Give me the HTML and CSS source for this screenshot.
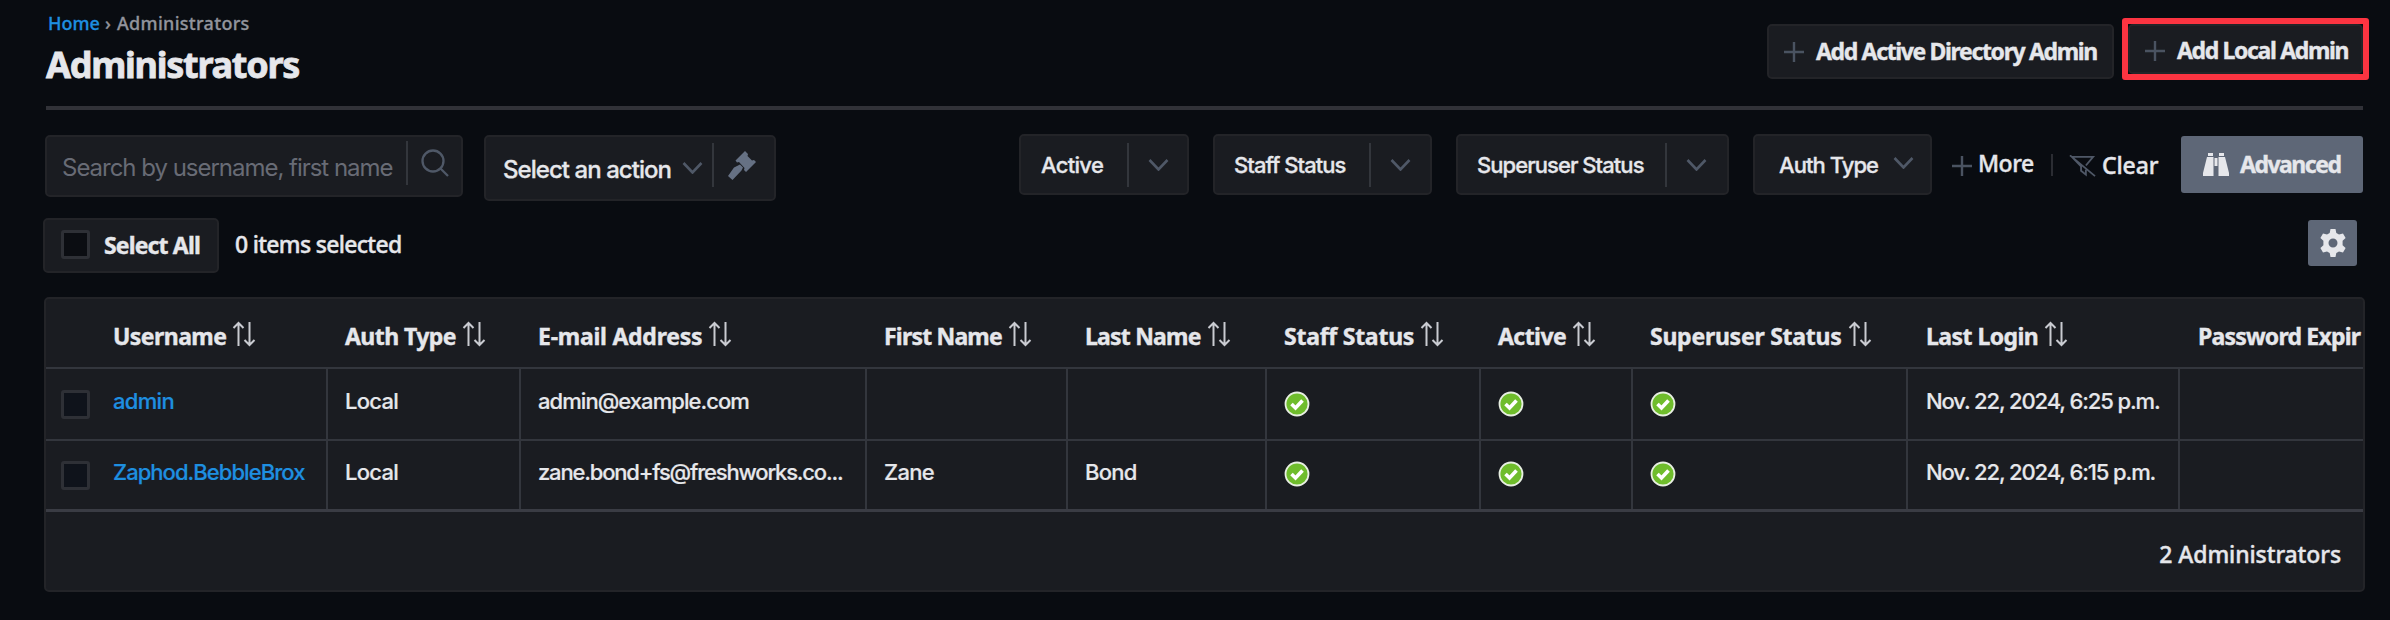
FILE: index.html
```html
<!DOCTYPE html>
<html lang="en">
<head>
<meta charset="utf-8">
<title>Administrators</title>
<link rel="stylesheet" href="styles.css">
</head>
<body>
<svg width="0" height="0" class="defs" aria-hidden="true">
  <symbol id="plus" viewBox="0 0 20 20"><path d="M10 0v20M0 10h20" fill="none" stroke="currentColor" stroke-width="2.400"/></symbol>
  <symbol id="chev" viewBox="0 0 20 12"><path d="M1 1l9 9.500 9-9.500" fill="none" stroke="currentColor" stroke-width="2.600"/></symbol>
  <symbol id="sort" viewBox="0 0 24 26"><path d="M6.500 25V2M1.500 7l5-5 5 5M17.500 1v23M12.500 19l5 5 5-5" fill="none" stroke="currentColor" stroke-width="2"/></symbol>
  <symbol id="ok" viewBox="0 0 26 26"><circle cx="13" cy="13" r="11.500" fill="#6fbd2c" stroke="#e8efe2" stroke-width="1.800"/><path d="M7.500 13l4 4 7-7.500" fill="none" stroke="#fff" stroke-width="3.600"/></symbol>
</svg>
<header class="head">
  <div>
    <nav class="crumbs"><a class="link c-home">Home</a><span class="c-sep">›</span><span class="c-cur">Administrators</span></nav>
    <h1 class="title">Administrators</h1>
  </div>
  <div class="actions">
    <div class="btn add-ad"><svg class="plus"><use href="#plus"/></svg><span>Add Active Directory Admin</span></div>
    <div class="hilite"><div class="btn add-local"><svg class="plus"><use href="#plus"/></svg><span>Add Local Admin</span></div></div>
  </div>
</header>
<section class="filters">
  <div class="box search"><span class="ph">Search by username, first name</span><i class="div"></i><svg class="mag" viewBox="0 0 28 28"><circle cx="12" cy="12" r="10.500" fill="none" stroke="currentColor" stroke-width="2.300"/><path d="M19.500 19.500L27 27" stroke="currentColor" stroke-width="2.300"/></svg></div>
  <div class="box action"><span class="t-action">Select an action</span><svg class="chev"><use href="#chev"/></svg><i class="div"></i><svg class="gavel" viewBox="0 0 28 29"><path d="M17 0l3 3-.5 2 4.500 4.500 2-.5 2 2L18 21l-2-2 .5-2-5.500-6-2 .5L7.500 9.500zM12 13.500l3 3-1.500 3L4.500 29 0 25l6-8.500z" fill="currentColor"/></svg></div>
  <div class="box f-active"><span>Active</span><i class="div"></i><svg class="chev"><use href="#chev"/></svg></div>
  <div class="box f-staff"><span>Staff Status</span><i class="div"></i><svg class="chev"><use href="#chev"/></svg></div>
  <div class="box f-super"><span>Superuser Status</span><i class="div"></i><svg class="chev"><use href="#chev"/></svg></div>
  <div class="box f-auth"><span>Auth Type</span><svg class="chev"><use href="#chev"/></svg></div>
  <div class="more"><svg class="plus"><use href="#plus"/></svg><span>More</span></div>
  <i class="bar"></i>
  <div class="clear"><svg class="funnel" viewBox="0 0 28 22"><path d="M3 1.500h22l-7.500 9M17.500 15v5l-5-4v-4.500L3 1.500M1 0l26 21.500" fill="none" stroke="currentColor" stroke-width="1.900"/></svg><span>Clear</span></div>
  <div class="advanced"><svg class="bino" viewBox="0 0 26 23"><path d="M5 0h5v3H5zM16 0h5v3h-5zM4 4h6.500v19H0v-3zM15.500 4H22l4 16v3H15.500zM11.500 5h3v8h-3z" fill="currentColor"/></svg><span>Advanced</span></div>
</section>
<section class="selection">
  <div class="btn all"><i class="cb"></i><span>Select All</span></div>
  <span class="count">0 items selected</span>
  <div class="gear"><svg viewBox="0 0 28 28"><path fill-rule="evenodd" fill="currentColor" d="M11.500 0h5l.8 4 2.700 1.500L24 4.500l2.600 4.500-3 2.800v4.400l3 2.800L24 23.500l-4-1-2.700 1.500-.8 4h-5l-.8-4L8 22.500l-4 1L1.400 19l3-2.800v-4.400l-3-2.800L4 4.500l4 1L10.700 4zM14 9.500a4.500 4.500 0 1 0 0 9 4.500 4.500 0 0 0 0-9z"/></svg></div>
</section>
<section class="panel">
  <div class="row th">
    <div class="c1"></div>
    <div class="cell first"><span class="h1">Username</span><svg class="sort"><use href="#sort"/></svg></div>
    <div class="cell"><span class="h1">Auth Type</span><svg class="sort"><use href="#sort"/></svg></div>
    <div class="cell"><span class="h2">E-mail Address</span><svg class="sort"><use href="#sort"/></svg></div>
    <div class="cell"><span class="h3">First Name</span><svg class="sort"><use href="#sort"/></svg></div>
    <div class="cell"><span class="h3">Last Name</span><svg class="sort"><use href="#sort"/></svg></div>
    <div class="cell"><span class="h2">Staff Status</span><svg class="sort"><use href="#sort"/></svg></div>
    <div class="cell"><span class="h1">Active</span><svg class="sort"><use href="#sort"/></svg></div>
    <div class="cell"><span class="h2">Superuser Status</span><svg class="sort"><use href="#sort"/></svg></div>
    <div class="cell wide"><span class="h1">Last Login</span><svg class="sort"><use href="#sort"/></svg></div>
    <div class="cell wide"><span class="h3">Password Expir</span></div>
  </div>
  <div class="row td">
    <div class="c1"><i class="cb"></i></div>
    <div class="cell first"><a class="link short">admin</a></div>
    <div class="cell"><span class="short">Local</span></div>
    <div class="cell"><span>admin@example.com</span></div>
    <div class="cell"></div>
    <div class="cell"></div>
    <div class="cell"><svg class="ok"><use href="#ok"/></svg></div>
    <div class="cell"><svg class="ok"><use href="#ok"/></svg></div>
    <div class="cell"><svg class="ok"><use href="#ok"/></svg></div>
    <div class="cell wide"><span class="date">Nov. 22, 2024, 6:25 p.m.</span></div>
    <div class="cell"></div>
  </div>
  <div class="row td last">
    <div class="c1"><i class="cb"></i></div>
    <div class="cell first"><a class="link">Zaphod.BebbleBrox</a></div>
    <div class="cell"><span class="short">Local</span></div>
    <div class="cell"><span class="mail">zane.bond+fs@freshworks.co...</span></div>
    <div class="cell"><span class="short">Zane</span></div>
    <div class="cell"><span class="short">Bond</span></div>
    <div class="cell"><svg class="ok"><use href="#ok"/></svg></div>
    <div class="cell"><svg class="ok"><use href="#ok"/></svg></div>
    <div class="cell"><svg class="ok"><use href="#ok"/></svg></div>
    <div class="cell wide"><span class="date">Nov. 22, 2024, 6:15 p.m.</span></div>
    <div class="cell"></div>
  </div>
  <footer class="foot">2 Administrators</footer>
</section>
</body>
</html>
```

FILE: styles.css
```css
* { box-sizing: border-box; }
body {
  margin: 0; width: 2390px; height: 620px; overflow: hidden;
  background: #090c11; color: #e6e7eb;
  font: 500 22px/28px Inter, sans-serif;
  letter-spacing: -0.95px;
  white-space: nowrap;
}
svg { display: block; flex: none; }
.defs { position: absolute; }
.link { color: #1e8fe0; }
.head {
  display: flex; justify-content: space-between;
  height: 110px; margin: 0 27px 0 46px;
  border-bottom: 4px solid #313238;
}
.crumbs {
  display: flex; padding: 11px 0 0 2px; height: 36px;
  font: 500 18px/24px "Noto Sans", sans-serif; color: #92949c; letter-spacing: 0;
  -webkit-text-stroke: 0.3px currentColor;
}
.c-home { width: 57px; }
.c-sep { width: 12px; }
.c-cur { letter-spacing: 0.3px; }
.title {
  margin: 8px 0 0; font: 700 36px/42px "Noto Sans", sans-serif; letter-spacing: -1.25px;
  -webkit-text-stroke: 0.8px currentColor;
}
.actions { display: flex; align-items: flex-start; gap: 8px; padding-top: 18px; margin-right: -6px; }
.btn, .box, .panel { background: #1a1c21; border: 2px solid #232428; border-radius: 5px; }
.btn {
  display: flex; align-items: center;
  font: 700 23px/30px "Noto Sans", sans-serif; letter-spacing: -1.35px;
  -webkit-text-stroke: 0.4px currentColor;
}
.btn span { margin-top: -2px; }
.plus { width: 20px; height: 20px; color: #4a5361; }
.btn .plus { margin-right: 12px; }
.add-ad { width: 347px; height: 55px; margin-top: 6px; padding-left: 15px; }
.hilite { border: 6px solid #fc3441; border-radius: 3px; width: 247px; height: 62px; }
.add-local { height: 50px; padding: 3px 0 0 15px; }
.filters { display: flex; align-items: flex-start; height: 107px; padding: 24px 0 0 45px; }
.box { display: flex; align-items: center; height: 61px; }
.div { flex: none; width: 2px; height: 44px; background: #33363c; }
.chev { width: 21px; height: 12px; color: #4f5867; }
.search { width: 418px; height: 62px; margin: 1px 21px 0 0; padding-left: 15px; font-weight: 400; color: #686b75; }
.ph { width: 344px; font-size: 24px; letter-spacing: -1.02px; padding-top: 4px; }
.mag { width: 28px; height: 28px; margin-left: 13px; color: #4f5867; }
.action { width: 292px; height: 66px; margin: 1px 243px 0 0; padding-left: 17px; }
.action .div, .search .div, .mag, .gavel { position: relative; top: -3px; }
.t-action { width: 179px; font-size: 24px; padding-top: 3px; -webkit-text-stroke: 0.3px currentColor; }
.action .div { margin: 0 14px 0 9px; }
.gavel { width: 28px; height: 29px; color: #667184; }
.f-active { width: 170px; margin-right: 24px; padding-left: 20px; }
.f-active span { width: 86px; letter-spacing: -0.7px; }
.f-staff { width: 219px; margin-right: 24px; padding-left: 19px; }
.f-staff span { width: 135px; }
.f-super { width: 273px; margin-right: 24px; padding-left: 19px; }
.f-super span { width: 188px; }
.box .div + .chev { margin-left: 19px; }
.f-auth { width: 179px; margin-right: 20px; padding-left: 24px; }
.f-auth span { width: 114px; }
.f-active, .f-staff, .f-super, .f-auth { -webkit-text-stroke: 0.3px currentColor; }
.f-auth .chev { margin-top: -4px; }
.more, .clear, .count, .foot {
  font: 500 23px/30px "Noto Sans", sans-serif; letter-spacing: -0.5px;
  -webkit-text-stroke: 0.4px currentColor;
}
.more, .clear { display: flex; align-items: center; height: 61px; }
.more .plus { margin: 2px 6px 0 0; }
.more span, .clear span { margin-top: -3px; }
.more { width: 99px; }
.bar { width: 2px; height: 22px; margin: 20px 16px 0 0; background: #2b2d33; }
.clear { width: 112px; padding-top: 3px; letter-spacing: -0.1px; }
.funnel { width: 27px; height: 22px; margin-right: 6px; color: #4f5867; }
.advanced {
  display: flex; align-items: center; width: 182px; height: 57px; margin-top: 2px; padding-left: 22px;
  background: #5e6777; border-radius: 3px; font: 700 23px/30px "Noto Sans", sans-serif;
  letter-spacing: -1.5px; -webkit-text-stroke: 0.4px currentColor;
}
.advanced span { margin-top: -2px; }
.bino { width: 26px; height: 23px; margin-right: 11px; }
.selection { display: flex; align-items: flex-start; height: 80px; padding: 1px 33px 0 43px; }
.all { width: 176px; height: 55px; padding-left: 16px; letter-spacing: -0.85px; }
.cb { display: block; width: 29px; height: 29px; border: 3px solid #2e3036; border-radius: 3px; background: #0b0d12; }
.all .cb { margin: -2px 14px 0 0; }
.count { margin: 11px auto 0 16px; letter-spacing: -0.7px; }
.gear { display: flex; align-items: center; justify-content: center; width: 49px; height: 46px; margin-top: 2px; background: #5e6777; border-radius: 3px; }
.gear svg { width: 28px; height: 28px; }
.panel { width: 2321px; height: 295px; margin-left: 44px; overflow: hidden; }
.row { display: grid; grid-template-columns: 49px 233px 193px 346px 201px 199px 214px 152px 275px 272px 300px; }
.th {
  height: 70px; border-bottom: 2px solid #33363d;
  font: 700 23px/30px "Noto Sans", sans-serif; -webkit-text-stroke: 0.4px currentColor;
}
.td { height: 72px; border-bottom: 2px solid #33363d; }
.last { height: 71px; border-bottom: 3px solid #3a3c44; }
.cell { display: flex; align-items: center; padding-left: 17px; border-right: 2px solid #33363d; }
.first { padding-left: 18px; }
.wide { padding-left: 18px; }
.td span, .td a { margin-bottom: 6px; -webkit-text-stroke: 0.2px currentColor; }
.td .short { letter-spacing: -0.7px; }
.td .mail { letter-spacing: -1.18px; }
.td .date { letter-spacing: -1.1px; }
.th .cell { border-right: 0; padding-top: 5px; }
.h1 { letter-spacing: -0.55px; }
.h2 { letter-spacing: -0.25px; }
.h3 { letter-spacing: -0.8px; }
.c1 { display: flex; align-items: center; padding-left: 15px; }
.td .cb { background: #0f131b; }
.sort { width: 24px; height: 26px; margin: -4px 0 0 6px; color: #c9cbd1; }
.ok { width: 26px; height: 26px; }
.last .ok { margin-top: -2px; }
.foot { padding: 27px 22px 0 0; text-align: right; letter-spacing: -0.1px; }
```
